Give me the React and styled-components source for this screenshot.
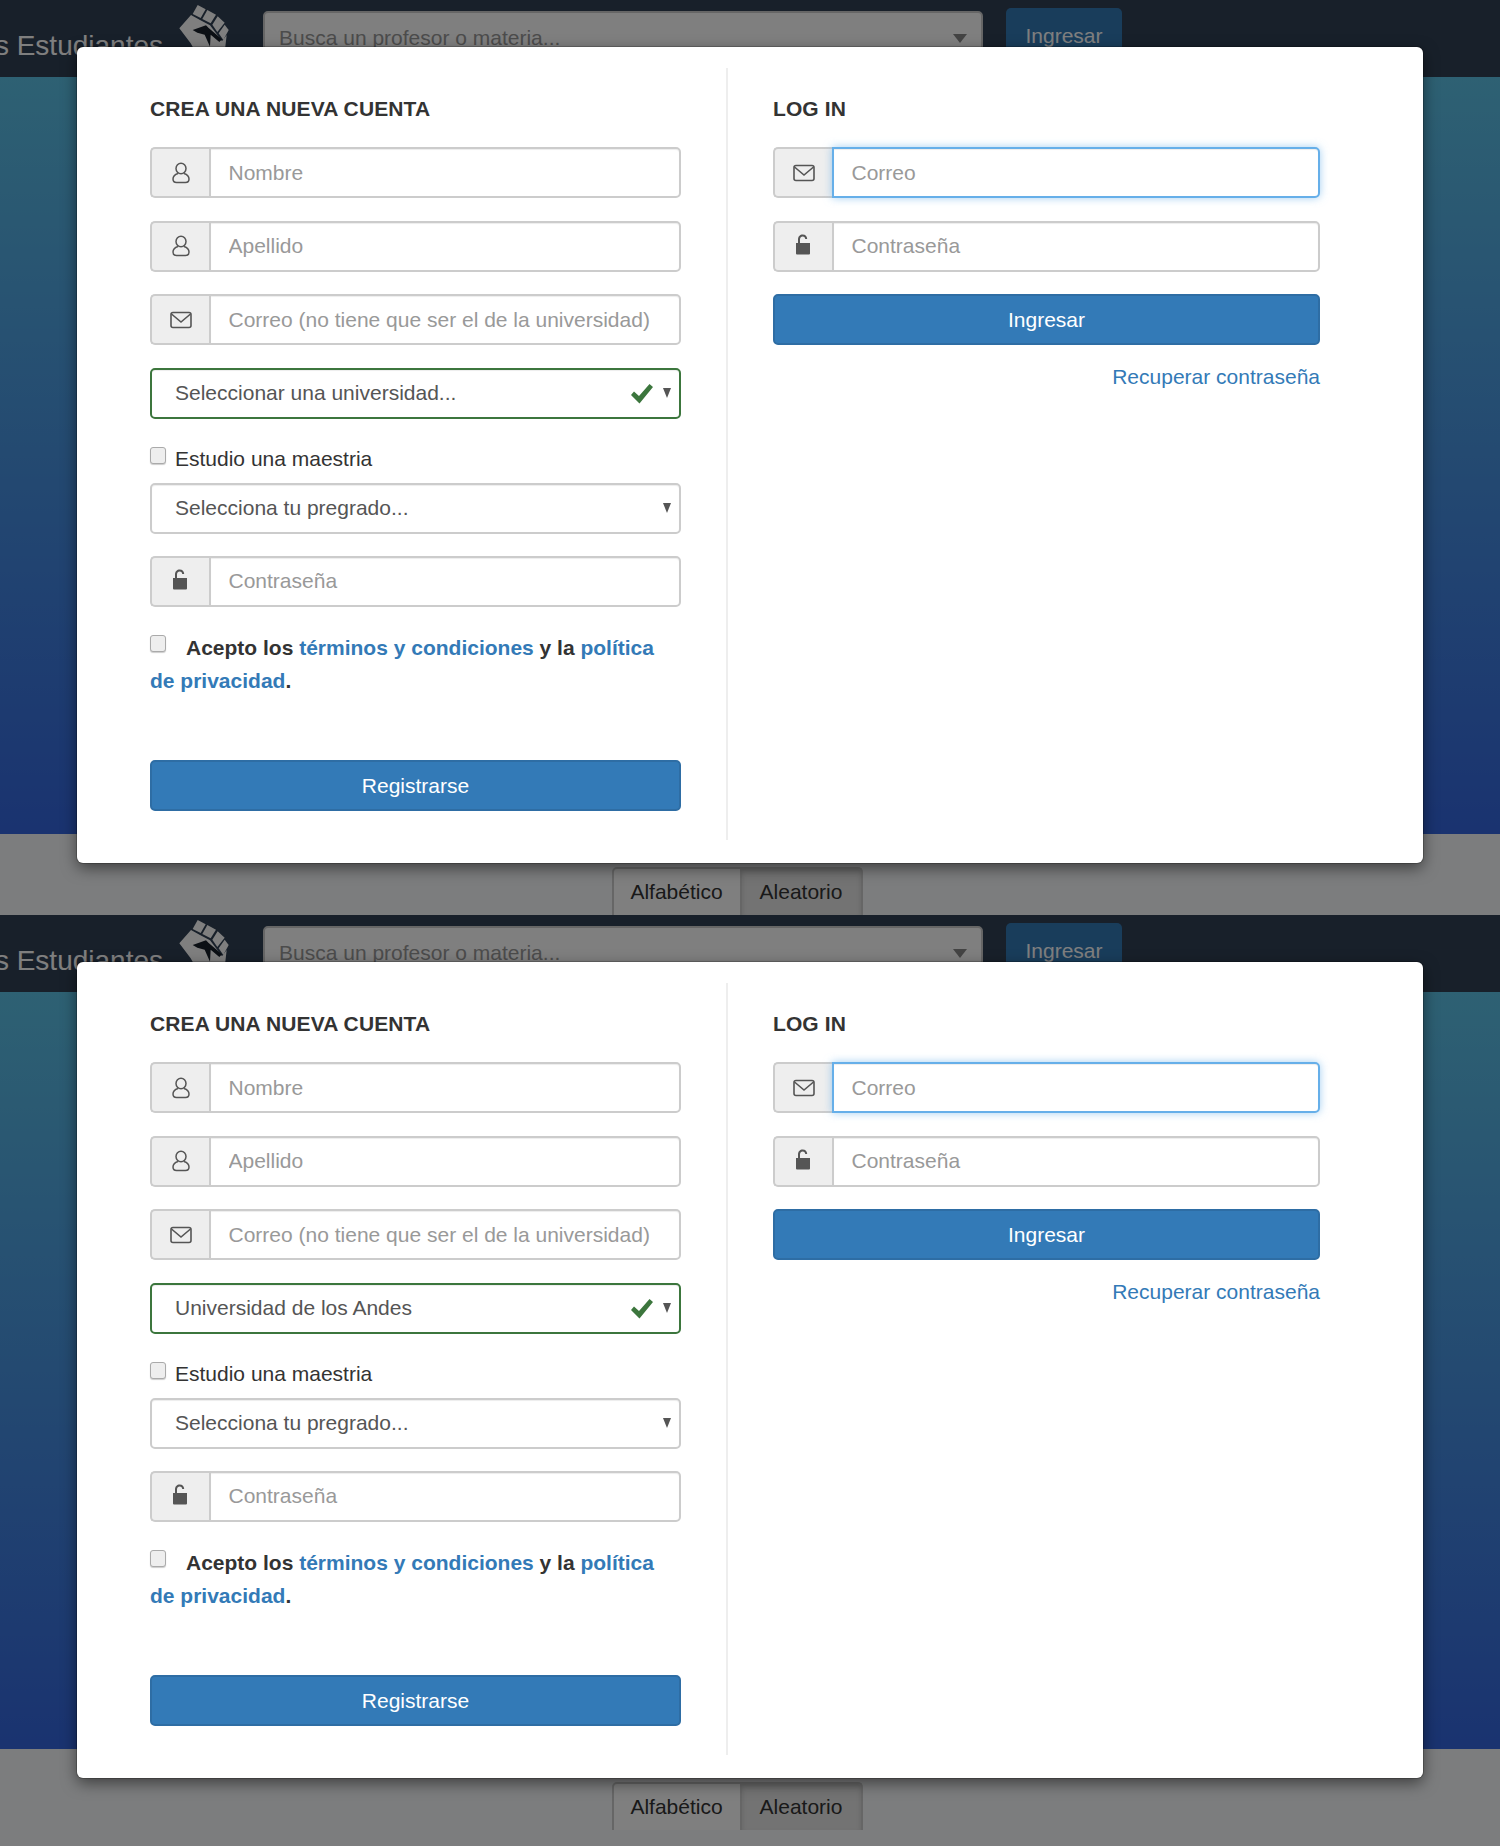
import React from 'react'
import styled, { createGlobalStyle } from 'styled-components'

const Global = createGlobalStyle`
  * { box-sizing: border-box; }
  body {
    margin: 0;
    background: #f8f9fb;
    font-family: "Liberation Sans", Arial, sans-serif;
    color: #333;
  }
`

const Screen = styled.section`
  position: relative;
  height: ${p => p.$height}px;
  overflow: hidden;
  display: flex;
  flex-direction: column;
`
const TopBar = styled.header`
  height: 77px;
  flex: none;
  background: #304054;
  display: flex;
  align-items: flex-start;
`
const Brand = styled.div`
  width: 163px;
  margin-top: 27px;
  flex: none;
  direction: rtl;
  overflow: hidden;
  white-space: nowrap;
  font-size: 28px;
  line-height: 38px;
  color: #fff;
`
const FistMark = styled.svg`
  flex: none;
  width: 80px;
  height: 60px;
  margin-left: -3px;
  fill: #fff;
`
const Search = styled.div`
  width: 720px;
  height: 54px;
  margin: 11px 23px 0 23px;
  flex: none;
  padding: 0 14px;
  background: #fff;
  border: 2px solid #ccc;
  border-radius: 5px;
  display: flex;
  align-items: center;
  justify-content: space-between;
  font-size: 21px;
  color: #999;
`
const SearchCaret = styled.span`
  width: 0;
  height: 0;
  border-left: 7px solid transparent;
  border-right: 7px solid transparent;
  border-top: 9px solid #888;
`
const TopButton = styled.button`
  width: 116px;
  height: 56px;
  margin-top: 8px;
  flex: none;
  background: #337ab7;
  border: none;
  border-radius: 5px;
  font: 21px "Liberation Sans", Arial, sans-serif;
  color: #fff;
`
const Hero = styled.div`
  height: 757px;
  flex: none;
  background: linear-gradient(180deg, #5cc2e6 0%, #3466e0 100%);
`
const Footer = styled.div`
  flex: 1;
  background: #f8fafc;
  padding: 33px 26px 0 0;
  display: flex;
  justify-content: center;
  align-items: flex-start;
`
const Tab = styled.div`
  height: 48px;
  width: ${p => p.$width}px;
  display: flex;
  align-items: center;
  justify-content: center;
  font-size: 21px;
  color: #333;
  border: 2px solid #ccc;
  border-bottom: none;
  background: ${p => (p.$active ? '#e6e6e6' : '#fff')};
  box-shadow: ${p => (p.$active ? 'inset 0 3px 5px rgba(0,0,0,.125)' : 'none')};
  border-radius: ${p => (p.$active ? '0 5px 0 0' : '5px 0 0 0')};
  margin-left: ${p => (p.$active ? '-2px' : '0')};
`
const Backdrop = styled.div`
  position: absolute;
  inset: 0;
  background: rgba(0, 0, 0, 0.5);
`
const Modal = styled.div`
  position: absolute;
  left: 77px;
  top: 47px;
  width: 1346px;
  height: 816px;
  padding: 21px 0 23px 73px;
  display: flex;
  background: #fff;
  border-radius: 6px;
  box-shadow: 0 5px 15px rgba(0, 0, 0, 0.5), 0 0 0 1px rgba(0, 0, 0, 0.2);
`
const LeftCol = styled.div`
  width: 578px;
  padding: 29px 45px 0 0;
  border-right: 2px solid #eee;
`
const RightCol = styled.div`
  width: 592px;
  padding: 29px 0 0 45px;
`
const Title = styled.h4`
  margin: 0 0 26px;
  font-size: 21px;
  line-height: 24px;
  font-weight: 700;
  color: #333;
  letter-spacing: 0.1px;
`
const Group = styled.div`
  display: flex;
  height: 51px;
  margin-bottom: 22.6px;
`
const Addon = styled.span`
  width: 59px;
  flex: none;
  display: flex;
  align-items: center;
  justify-content: center;
  background: #eee;
  border: 2px solid #ccc;
  border-right: none;
  border-radius: 5px 0 0 5px;
  color: #555;
`
const Input = styled.input`
  flex: 1;
  min-width: 0;
  padding: 0 17.5px;
  border: 2px solid ${p => (p.$focus ? '#66afe9' : '#ccc')};
  border-radius: 0 5px 5px 0;
  font: 21px "Liberation Sans", Arial, sans-serif;
  color: #555;
  outline: none;
  box-shadow: ${p =>
    p.$focus
      ? 'inset 0 1px 1px rgba(0,0,0,.075), 0 0 8px rgba(102,175,233,.6)'
      : 'inset 0 1px 1px rgba(0,0,0,.075)'};
  &::placeholder { color: #999; opacity: 1; }
`
const SelectWrap = styled.div`
  position: relative;
  height: 51px;
  margin-bottom: ${p => p.$gap}px;
`
const Select = styled.select`
  appearance: none;
  width: 100%;
  height: 100%;
  padding: 0 23px 2px;
  background: #fff;
  border: 2px solid ${p => (p.$valid ? '#3c763d' : '#ccc')};
  border-radius: 5px;
  font: 21px "Liberation Sans", Arial, sans-serif;
  color: #555;
  outline: none;
  box-shadow: inset 0 1px 1px rgba(0, 0, 0, 0.075);
`
const Caret = styled.span`
  position: absolute;
  right: 10px;
  top: 20px;
  width: 0;
  height: 0;
  border-left: 4.5px solid transparent;
  border-right: 4.5px solid transparent;
  border-top: 10px solid #555;
`
const Check = styled.svg`
  position: absolute;
  right: 28px;
  top: 16px;
  width: 22px;
  height: 20px;
  fill: #3c763d;
`
const Box = styled.input.attrs({ type: 'checkbox' })`
  appearance: none;
  width: 16px;
  height: 17px;
  margin: 0;
  flex: none;
  background: #eee;
  border: 1px solid #aaa;
  border-radius: 3px;
  box-shadow: 0 1px 1px rgba(0, 0, 0, 0.2);
`
const MasterRow = styled.label`
  display: flex;
  align-items: flex-start;
  gap: 9px;
  height: 36px;
  font-size: 21px;
  line-height: 26px;
`
const MasterText = styled.span`
  margin-top: -1px;
`
const Terms = styled.p`
  position: relative;
  margin: 0;
  height: 131px;
  padding-top: 2px;
  text-indent: 36px;
  font-size: 21px;
  line-height: 33px;
  font-weight: 700;
`
const TermsBox = styled(Box)`
  position: absolute;
  left: 0;
  top: 6px;
`
const Link = styled.a`
  color: #337ab7;
  font-weight: ${p => (p.$plain ? 400 : 'inherit')};
  text-decoration: none;
`
const Primary = styled.button`
  display: block;
  width: 100%;
  height: 51px;
  padding: 0;
  background: #337ab7;
  border: 2px solid #2e6da4;
  border-radius: 5px;
  font: 21px "Liberation Sans", Arial, sans-serif;
  color: #fff;
`
const Recover = styled.div`
  margin-top: 19px;
  text-align: right;
  font-size: 21px;
  line-height: 26px;
`

// raised fist, traced from the logo (only the upper part shows above the modal)
const Fist = () => (
  <FistMark viewBox="0 0 240 180">
    <path d="M98 42 113 15 137 28 122 54z" />
    <path d="M127 57 142 30 168 44 152 70z" />
    <path d="M157 74 173 49 194 68 172 96z" />
    <path d="M176 100 194 74 206 90 190 120z" />
    <path d="M58 85 93 45 120 60 150 76 170 102 186 124 200 105 196 140 170 180 120 180 92 130z" />
    <path fill="#18202a" d="M98 90 138 76 146 84 186 118 178 126 152 104 150 140 134 104 112 98z" />
  </FistMark>
)

const UserIcon = () => (
  <svg width="18" height="22" viewBox="0 0 18 22" fill="none" stroke="#555" strokeWidth="1.5">
    <ellipse cx="9" cy="6.5" rx="5" ry="5.2" />
    <path d="M6 11.500C3 12.500 1 14 1 17c0 2.500 1.500 3.500 3.500 3.500h9c2 0 3.500-1 3.500-3.500 0-3-2-4.500-5-5.500" />
  </svg>
)
const MailIcon = () => (
  <svg width="22" height="18" viewBox="0 0 22 18" fill="none" stroke="#555" strokeWidth="1.6">
    <rect x="1" y="1.500" width="20" height="15" rx="2" />
    <path d="M1.500 3l9.500 8 9.500-8" />
  </svg>
)
const LockIcon = () => (
  <svg width="16" height="21" viewBox="0 0 16 21" style={{ marginTop: -3, marginRight: 2 }}>
    <path
      fill="#555"
      d="M1 9h14v10.500a1 1 0 0 1-1 1H2a1 1 0 0 1-1-1zM3 9V5.500C3 2.500 5 .5 7.700.5s4.500 2 4.500 4.500h-2C10.200 3.500 9.200 2.500 7.700 2.500S5 3.500 5 5.500V9z"
    />
  </svg>
)

const Field = ({ icon, placeholder, focus }) => (
  <Group>
    <Addon>{icon}</Addon>
    <Input placeholder={placeholder} $focus={focus} />
  </Group>
)

function Page({ height, university }) {
  return (
    <Screen $height={height}>
      <TopBar>
        <Brand>Los Estudiantes</Brand>
        <Fist />
        <Search>
          Busca un profesor o materia...
          <SearchCaret />
        </Search>
        <TopButton>Ingresar</TopButton>
      </TopBar>
      <Hero />
      <Footer>
        <Tab $width={130}>Alfabético</Tab>
        <Tab $width={123} $active>Aleatorio</Tab>
      </Footer>
      <Backdrop />
      <Modal>
        <LeftCol>
          <Title>CREA UNA NUEVA CUENTA</Title>
          <Field icon={<UserIcon />} placeholder="Nombre" />
          <Field icon={<UserIcon />} placeholder="Apellido" />
          <Field icon={<MailIcon />} placeholder="Correo (no tiene que ser el de la universidad)" />
          <SelectWrap $gap={28}>
            <Select $valid defaultValue={university}>
              <option>{university}</option>
            </Select>
            <Check viewBox="0 0 22 20">
              <path d="M0 11l3-3.500 5 4.500L18.500 0 22 3 8.500 19.500z" />
            </Check>
            <Caret />
          </SelectWrap>
          <MasterRow>
            <Box />
            <MasterText>Estudio una maestria</MasterText>
          </MasterRow>
          <SelectWrap $gap={22}>
            <Select defaultValue="Selecciona tu pregrado...">
              <option>Selecciona tu pregrado...</option>
            </Select>
            <Caret />
          </SelectWrap>
          <Field icon={<LockIcon />} placeholder="Contraseña" />
          <Terms>
            <TermsBox />
            Acepto los <Link href="#">términos y condiciones</Link> y la{' '}
            <Link href="#">política de privacidad</Link>.
          </Terms>
          <Primary>Registrarse</Primary>
        </LeftCol>
        <RightCol>
          <Title>LOG IN</Title>
          <Field icon={<MailIcon />} placeholder="Correo" focus />
          <Field icon={<LockIcon />} placeholder="Contraseña" />
          <Primary>Ingresar</Primary>
          <Recover>
            <Link href="#" $plain>Recuperar contraseña</Link>
          </Recover>
        </RightCol>
      </Modal>
    </Screen>
  )
}

export default function App() {
  return (
    <>
      <Global />
      <Page height={915} university="Seleccionar una universidad..." />
      <Page height={931} university="Universidad de los Andes" />
    </>
  )
}
